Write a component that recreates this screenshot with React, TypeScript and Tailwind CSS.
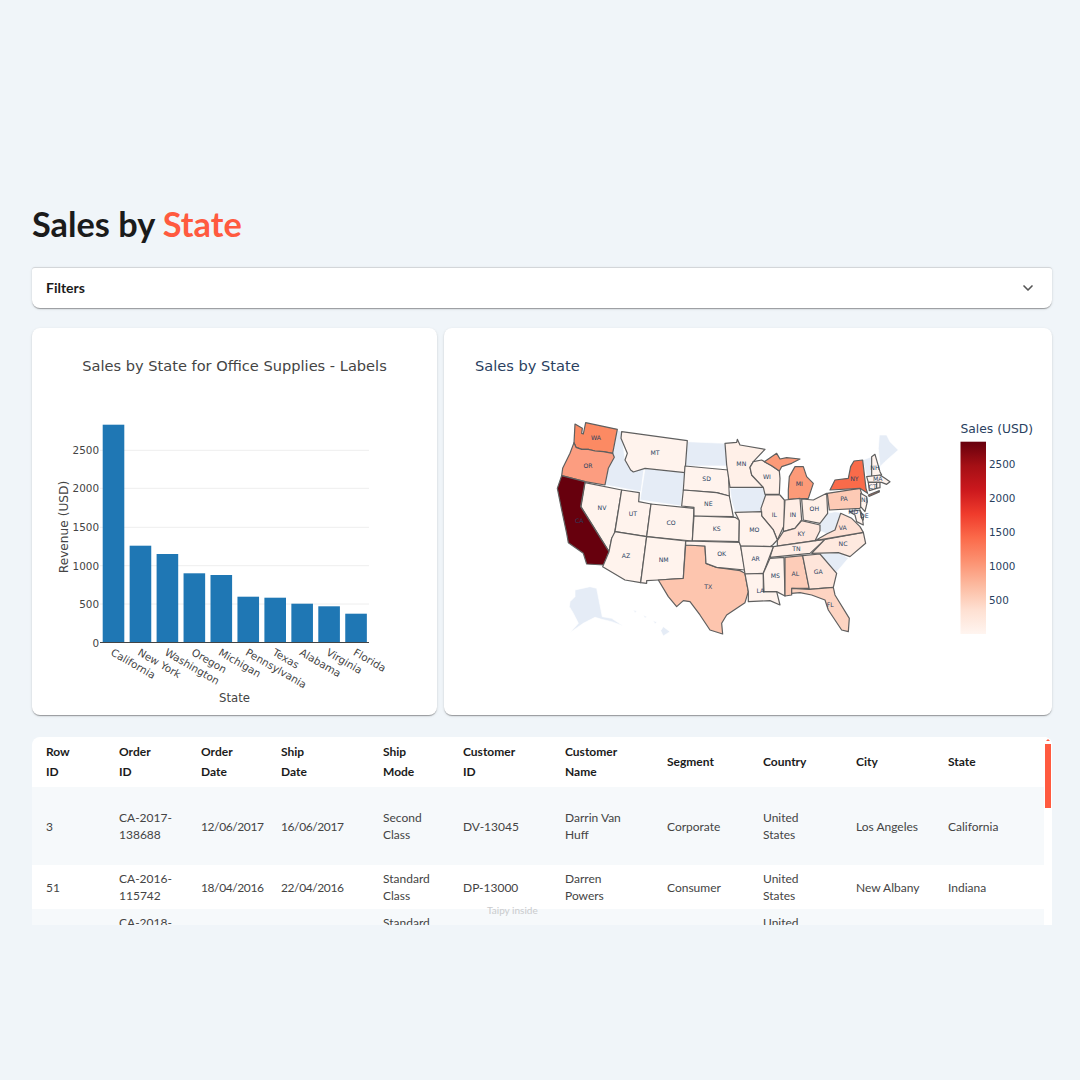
import { ChevronDown } from 'lucide-react';

const lato = { fontFamily: 'Lato, sans-serif' };

const bars = [
  { name: 'California', top: 424.7 },
  { name: 'New York', top: 545.7 },
  { name: 'Washington', top: 554 },
  { name: 'Oregon', top: 573.3 },
  { name: 'Michigan', top: 575 },
  { name: 'Pennsylvania', top: 596.7 },
  { name: 'Texas', top: 597.7 },
  { name: 'Alabama', top: 603.7 },
  { name: 'Virginia', top: 606.3 },
  { name: 'Florida', top: 613.7 },
];

const ticks = [
  { label: '0', y: 642.5 },
  { label: '500', y: 604 },
  { label: '1000', y: 565.7 },
  { label: '1500', y: 527.3 },
  { label: '2000', y: 488.3 },
  { label: '2500', y: 450.3 },
];

type StateShape = { d: string; fill: string; label?: string; lx?: number; ly?: number };

const noData = '#e5ecf6';
const pale = '#fff3ed';

// shapes are traced at 3x, origin (540,410)
const westStates: StateShape[] = [
  { d: 'M232,60 L245,65 L255,150 L275,185 L312,175 L303,245 L195,225 L205,175 L223,142 L218,130 Z', fill: noData },
  { d: 'M315,175 L435,188 L423,288 L300,270 Z', fill: noData },
  { d: 'M442,95 L555,100 L565,168 L435,168 Z', fill: noData },
  { d: 'M105,560 L105,540 L150,530 L170,535 L187,620 L215,625 L250,648 L215,635 L185,628 L165,622 L130,640 L90,668 L115,640 L100,610 L88,590 L90,575 Z', fill: noData },
  { d: 'M280,600 L290,603 L285,608 Z M310,615 L320,620 L315,625 Z M340,632 L350,636 L345,642 Z M370,650 L390,665 L370,678 L362,662 Z', fill: noData },
];

const westOutlined: StateShape[] = [
  { d: 'M105,42 L127,55 L125,70 L130,72 L137,38 L232,58 L218,130 L190,125 L165,123 L145,118 L125,118 L108,112 L102,98 Z', fill: '#fc8a63', label: 'WA', lx: 168, ly: 84 },
  { d: 'M102,98 L108,112 L125,118 L145,118 L165,123 L190,125 L218,130 L223,142 L205,175 L195,225 L135,215 L65,197 L68,175 L90,130 Z', fill: '#fc9d80', label: 'OR', lx: 144, ly: 166 },
  { d: 'M135,218 L245,240 L222,380 L215,385 L207,425 L123,290 Z', fill: pale, label: 'NV', lx: 186, ly: 293 },
  { d: 'M65,197 L135,215 L122,290 L207,425 L192,465 L140,462 L130,430 L85,398 L80,370 L65,300 L52,235 Z', fill: '#67000d', label: 'CA', lx: 118, ly: 331 },
  { d: 'M245,65 L442,92 L435,188 L315,175 L280,186 L272,180 L255,150 L262,130 L243,85 Z', fill: pale, label: 'MT', lx: 345, ly: 127 },
  { d: 'M245,240 L298,248 L296,275 L333,282 L320,380 L225,365 Z', fill: pale, label: 'UT', lx: 279, ly: 312 },
  { d: 'M333,282 L462,295 L457,393 L320,380 Z', fill: pale, label: 'CO', lx: 393, ly: 337 },
  { d: 'M225,365 L320,380 L302,518 L255,510 L188,470 L207,425 L215,385 Z', fill: pale, label: 'AZ', lx: 258, ly: 437 },
  { d: 'M320,380 L437,393 L430,505 L355,510 L320,512 L320,520 L302,518 Z', fill: pale, label: 'NM', lx: 371, ly: 448 },
  { d: 'M437,405 L495,408 L498,460 L530,472 L600,482 L615,490 L625,545 L615,578 L560,615 L545,640 L548,672 L510,660 L480,615 L450,575 L430,572 L410,590 L385,560 L355,510 L430,505 Z', fill: '#fdc5ae', label: 'TX', lx: 505, ly: 531 },
  { d: 'M435,168 L565,180 L568,258 L530,248 L430,240 Z', fill: pale, label: 'SD', lx: 500, ly: 206 },
  { d: 'M430,240 L530,248 L568,258 L580,320 L462,318 L462,292 L425,288 Z', fill: pale, label: 'NE', lx: 505, ly: 281 },
  { d: 'M462,318 L585,322 L598,330 L597,395 L457,392 Z', fill: pale, label: 'KS', lx: 530, ly: 357 },
  { d: 'M437,393 L600,397 L615,480 L530,472 L498,460 L495,408 L437,405 Z', fill: pale, label: 'OK', lx: 545, ly: 431 },
];

// same trace scale, origin (720,410)
const eastShapes: StateShape[] = [
  { d: 'M30,235 L130,232 L137,255 L147,285 L125,305 L45,305 L35,275 Z', fill: noData },
  { d: 'M300,362 L298,345 L322,310 L345,305 L365,308 L345,360 L320,372 Z', fill: noData },
  { d: 'M300,432 L360,428 L385,445 L345,492 Z', fill: noData },
  { d: 'M478,75 L500,75 L510,95 L535,120 L495,155 L480,170 L475,115 Z', fill: noData },
  { d: 'M428,150 L455,140 L455,200 L440,200 Z', fill: noData },
];

const eastOutlined: StateShape[] = [
  { d: 'M15,100 L50,97 L52,88 L60,105 L135,118 L100,155 L90,172 L95,195 L130,232 L30,232 L20,165 Z', fill: '#fff0e8', label: 'MN', lx: 64, ly: 162 },
  { d: 'M90,172 L100,155 L125,150 L155,167 L178,183 L180,205 L178,253 L135,253 L130,232 L95,195 Z', fill: '#fff0e8', label: 'WI', lx: 141, ly: 201 },
  { d: 'M133,155 L170,130 L180,147 L200,143 L240,147 L215,160 L185,170 L178,183 L155,167 Z', fill: '#fc9a78' },
  { d: 'M205,240 L208,200 L225,170 L250,170 L260,200 L280,220 L265,265 L205,268 Z', fill: '#fc9a78', label: 'MI', lx: 238, ly: 222 },
  { d: 'M137,255 L180,255 L193,270 L193,345 L172,390 L160,360 L125,318 L123,295 Z', fill: '#ffeee6', label: 'IL', lx: 163, ly: 314 },
  { d: 'M195,270 L240,265 L245,330 L225,355 L190,365 Z', fill: '#ffeee6', label: 'IN', lx: 219, ly: 313 },
  { d: 'M245,267 L280,270 L320,250 L323,310 L300,340 L250,330 Z', fill: '#fff0e8', label: 'OH', lx: 283, ly: 296 },
  { d: 'M172,408 L172,392 L190,365 L225,355 L245,332 L300,345 L300,362 L285,392 Z', fill: '#fee7dd', label: 'KY', lx: 244, ly: 370 },
  { d: 'M160,410 L315,388 L270,430 L150,442 Z', fill: '#ffeee6', label: 'TN', lx: 229, ly: 415 },
  { d: 'M45,307 L125,305 L125,318 L160,360 L172,390 L158,405 L150,410 L62,408 L57,395 L58,332 Z', fill: pale, label: 'MO', lx: 103, ly: 358 },
  { d: 'M62,408 L160,410 L130,490 L75,492 Z', fill: pale, label: 'AR', lx: 107, ly: 446 },
  { d: 'M75,492 L130,490 L130,545 L170,545 L180,585 L150,572 L85,575 L85,545 Z', fill: pale, label: 'LA', lx: 121, ly: 542 },
  { d: 'M150,445 L192,442 L195,558 L170,545 L132,545 L130,490 Z', fill: pale, label: 'MS', lx: 166, ly: 496 },
  { d: 'M195,442 L248,437 L268,535 L215,535 L215,555 L195,558 Z', fill: '#fdccb8', label: 'AL', lx: 226, ly: 492 },
  { d: 'M248,437 L300,432 L350,490 L340,532 L268,538 Z', fill: '#fee5da', label: 'GA', lx: 295, ly: 486 },
  { d: 'M215,535 L268,538 L340,532 L345,555 L388,625 L385,665 L365,660 L325,600 L315,570 L275,555 L240,548 L215,550 Z', fill: '#fdd4c2', label: 'FL', lx: 331, ly: 584 },
  { d: 'M315,388 L430,367 L437,400 L390,440 L355,428 L275,430 Z', fill: '#fee9df', label: 'NC', lx: 369, ly: 401 },
  { d: 'M285,392 L320,372 L345,360 L362,310 L395,325 L420,350 L430,367 Z', fill: '#fee0d3', label: 'VA', lx: 368, ly: 353 },
  { d: 'M322,250 L420,235 L432,272 L420,295 L328,300 Z', fill: '#fdcab5', label: 'PA', lx: 372, ly: 266 },
  { d: 'M330,240 L345,210 L385,205 L392,170 L402,153 L428,150 L438,235 L443,250 L420,235 Z', fill: '#f96b4a', label: 'NY', lx: 403, ly: 207 },
  { d: 'M445,255 L478,242 L478,246 L447,259 Z', fill: '#f96b4a' },
  { d: 'M455,140 L465,133 L480,185 L485,195 L455,200 Z', fill: pale, label: 'NH', lx: 465, ly: 172 },
  { d: 'M440,200 L480,195 L495,205 L510,215 L500,223 L485,217 L445,217 Z', fill: pale, label: 'MA', lx: 473, ly: 207 },
  { d: 'M445,217 L470,217 L470,235 L448,242 Z', fill: pale, label: 'CT', lx: 458, ly: 229 },
  { d: 'M470,217 L480,217 L480,233 L470,235 Z', fill: pale },
  { d: 'M422,250 L440,260 L442,275 L435,305 L422,290 Z', fill: pale, label: 'NJ', lx: 433, ly: 270 },
  { d: 'M388,305 L420,300 L428,330 L430,345 L410,335 L405,315 Z', fill: pale, label: 'MD', lx: 400, ly: 306 },
  { d: 'M420,300 L430,318 L430,330 L425,325 Z', fill: pale, label: 'DE', lx: 433, ly: 318 },
];

function StateGroup({ x, plain, outlined }: { x: number; plain: StateShape[]; outlined: StateShape[] }) {
  return (
    <g transform={`translate(${x} 410) scale(0.3333)`}>
      {plain.map((s, i) => (
        <path key={i} d={s.d} fill={s.fill} stroke="#ffffff" strokeWidth={2} />
      ))}
      {outlined.map((s, i) => (
        <path key={i} d={s.d} fill={s.fill} stroke="#5f5f5f" strokeWidth={3.6} strokeLinejoin="round" />
      ))}
      {outlined.map((s) =>
        s.label ? (
          <text key={s.label} x={s.lx} y={s.ly} textAnchor="middle" dominantBaseline="central" fontSize={18.5} fill="#2a3f5f">
            {s.label}
          </text>
        ) : null
      )}
    </g>
  );
}

function BarChart() {
  return (
    <svg viewBox="32 328 405 387" className="block w-full h-full" fontFamily="'DejaVu Sans', Verdana, sans-serif">
      <text x={234.5} y={371} textAnchor="middle" fontSize={14.6} fill="#444444">
        Sales by State for Office Supplies - Labels
      </text>
      {ticks.map((t) => (
        <g key={t.label}>
          {t.label !== '0' && <line x1={100} x2={369} y1={t.y} y2={t.y} stroke="#eeeeee" />}
          <text x={99} y={t.y + 4} textAnchor="end" fontSize={10.4} fill="#444444">
            {t.label}
          </text>
        </g>
      ))}
      {bars.map((b, i) => (
        <g key={b.name}>
          <rect x={102.7 + i * 26.95} y={b.top} width={21.6} height={642.5 - b.top} fill="#1f77b4" />
          <text
            x={110 + i * 26.95}
            y={654.5}
            fontSize={10.4}
            fill="#444444"
            transform={`rotate(30 ${110 + i * 26.95} 654.5)`}
          >
            {b.name}
          </text>
        </g>
      ))}
      <line x1={100} x2={369} y1={642.5} y2={642.5} stroke="#444444" />
      <text x={234.5} y={702} textAnchor="middle" fontSize={11.7} fill="#444444">
        State
      </text>
      <text x={68} y={527} textAnchor="middle" fontSize={12.2} fill="#444444" transform="rotate(-90 68 527)">
        Revenue (USD)
      </text>
    </svg>
  );
}

function MapChart() {
  const scale = [
    { label: '2500', y: 463.7 },
    { label: '2000', y: 497.7 },
    { label: '1500', y: 532 },
    { label: '1000', y: 566 },
    { label: '500', y: 600 },
  ];
  return (
    <svg viewBox="444 328 608 387" className="block w-full h-full" fontFamily="'DejaVu Sans', Verdana, sans-serif">
      <defs>
        <linearGradient id="reds" x1="0" y1="1" x2="0" y2="0">
          <stop offset="0" stopColor="#fff5f0" />
          <stop offset="0.125" stopColor="#fee0d2" />
          <stop offset="0.25" stopColor="#fcbba1" />
          <stop offset="0.375" stopColor="#fc9272" />
          <stop offset="0.5" stopColor="#fb6a4a" />
          <stop offset="0.625" stopColor="#ef3b2c" />
          <stop offset="0.75" stopColor="#cb181d" />
          <stop offset="0.875" stopColor="#a50f15" />
          <stop offset="1" stopColor="#67000d" />
        </linearGradient>
      </defs>
      <text x={475} y={371} fontSize={14.6} fill="#2a3f5f">
        Sales by State
      </text>
      <StateGroup x={540} plain={westStates} outlined={westOutlined} />
      <StateGroup x={720} plain={eastShapes} outlined={eastOutlined} />
      <text x={960.5} y={433} fontSize={12.3} fill="#2a3f5f">
        Sales (USD)
      </text>
      <rect x={960.5} y={441.7} width={25.5} height={192.3} fill="url(#reds)" />
      {scale.map((s) => (
        <text key={s.label} x={989} y={s.y + 4} fontSize={10.4} fill="#2a3f5f">
          {s.label}
        </text>
      ))}
    </svg>
  );
}

const heads = ['Row\nID', 'Order\nID', 'Order\nDate', 'Ship\nDate', 'Ship\nMode', 'Customer\nID', 'Customer\nName', 'Segment', 'Country', 'City', 'State'];

const rows = [
  { h: 'h-[78px]', bg: 'bg-[#f6f9fb]', cells: ['3', 'CA-2017-\n138688', '12/06/2017', '16/06/2017', 'Second\nClass', 'DV-13045', 'Darrin Van\nHuff', 'Corporate', 'United\nStates', 'Los Angeles', 'California'] },
  { h: 'h-[44px]', bg: 'bg-white', cells: ['51', 'CA-2016-\n115742', '18/04/2016', '22/04/2016', 'Standard\nClass', 'DP-13000', 'Darren\nPowers', 'Consumer', 'United\nStates', 'New Albany', 'Indiana'] },
  { h: 'h-[44px]', bg: 'bg-[#f6f9fb]', cells: ['', 'CA-2018-\n\u00a0', '', '', 'Standard\nClass', '', '', '', 'United\nStates', '', ''] },
];

const cardShadow = 'shadow-[0_2px_1px_-1px_rgba(0,0,0,0.2),0_1px_1px_0_rgba(0,0,0,0.14),0_1px_3px_0_rgba(0,0,0,0.12)]';

export default function App() {
  return (
    <div className="min-h-screen bg-[#f0f5f9] pt-[198px] pl-[32px] pr-[28px] text-[#1b1b1b]" style={lato}>
      <h1 className="h-[52px] text-[34.3px] leading-[52px] font-bold">
        Sales by <span className="text-[#ff5a3f]">State</span>
      </h1>

      <div className={`mt-[17px] flex h-[41px] items-center justify-between rounded-t-[3px] rounded-b-lg border-t border-[#d3d6d9] bg-white pl-[14px] pr-[16px] ${cardShadow}`}>
        <span className="text-sm font-bold">Filters</span>
        <ChevronDown size={16} strokeWidth={2.5} className="text-[#555555]" />
      </div>

      <div className="mt-[20px] grid h-[387px] grid-cols-[405px_608px] gap-[7px]">
        <div className={`overflow-hidden rounded-lg bg-white ${cardShadow}`}>
          <BarChart />
        </div>
        <div className={`overflow-hidden rounded-lg bg-white ${cardShadow}`}>
          <MapChart />
        </div>
      </div>

      <div className="relative mt-[22px] flex h-[188px] overflow-hidden rounded-t-lg bg-white">
        <table className="h-fit w-[1012px] table-fixed border-collapse text-[12px]">
          <colgroup>
            <col className="w-[73px]" />
            <col className="w-[82px]" />
            <col className="w-[80px]" />
            <col className="w-[102px]" />
            <col className="w-[80px]" />
            <col className="w-[102px]" />
            <col className="w-[102px]" />
            <col className="w-[96px]" />
            <col className="w-[93px]" />
            <col className="w-[92px]" />
            <col className="w-[110px]" />
          </colgroup>
          <thead>
            <tr className="h-[50px]">
              {heads.map((head) => (
                <th key={head} className="whitespace-pre pl-[14px] text-left text-[12px] leading-[20.5px] font-bold text-[#1b1b1b]">
                  {head}
                </th>
              ))}
            </tr>
          </thead>
          <tbody>
            {rows.map((r, i) => (
              <tr key={i} className={`${r.h} ${r.bg}`}>
                {r.cells.map((cell, j) => (
                  <td key={j} className={`whitespace-pre pl-[14px] text-left leading-[17px] text-[#444444] ${j === 2 || j === 3 ? 'tracking-[-0.4px]' : ''}`}>
                    {cell}
                  </td>
                ))}
              </tr>
            ))}
          </tbody>
        </table>

        <div className="flex w-[8px] flex-col items-center bg-white pt-[2px]">
          <div className="h-0 w-0 border-x-[2px] border-b-[2px] border-x-transparent border-b-[#ff5a3f]" />
          <div className="mt-[3px] h-[64px] w-[6px] bg-[#ff5a3f]" />
        </div>

        <span className="absolute left-[455px] top-[167px] text-[10px] leading-[12px] text-[#c9cbcd]">
          Taipy inside
        </span>
      </div>
    </div>
  );
}
